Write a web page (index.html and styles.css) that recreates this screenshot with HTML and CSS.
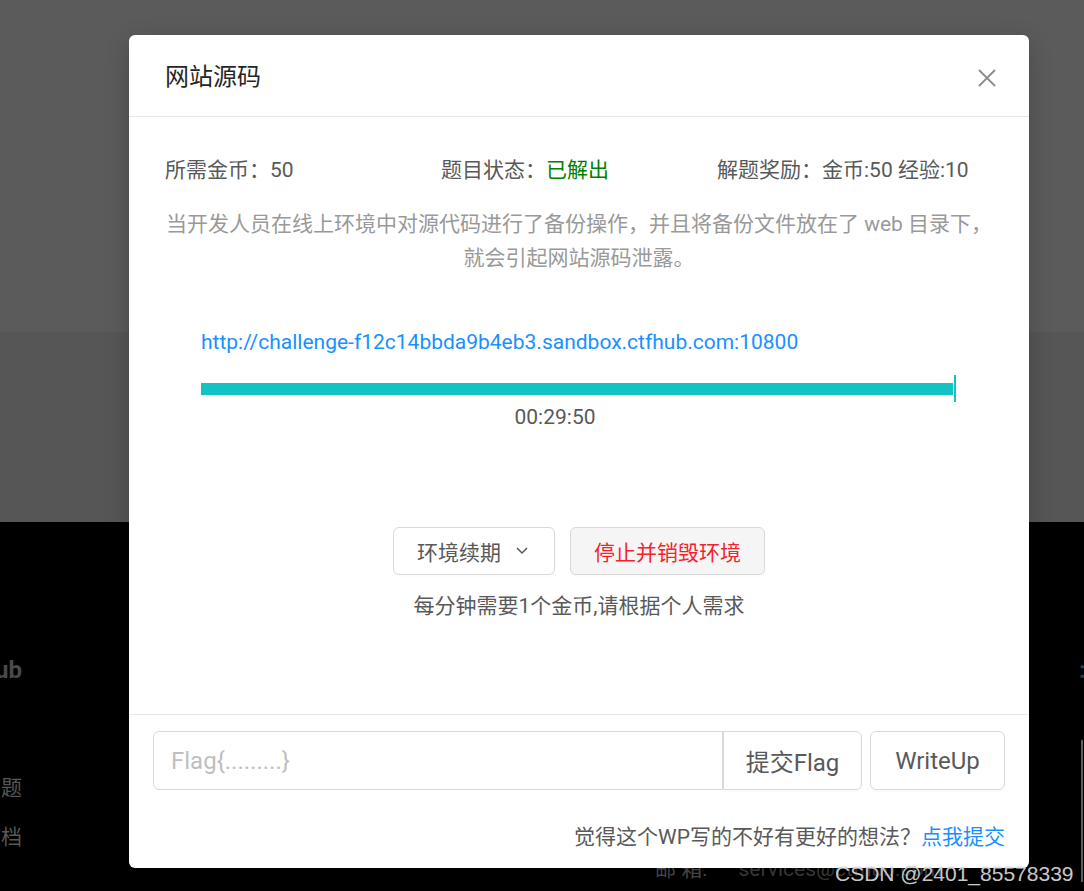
FILE: index.html
```html
<!DOCTYPE html>
<html lang="zh-CN">
<head>
    <meta charset="UTF-8">
    <meta name="viewport" content="width=device-width, initial-scale=1.0">
    <title>网站源码 - CTFHub</title>
    <link rel="stylesheet" href="styles.css">
</head>
<body>

<div class="page">
    <div class="page-top"></div>
    <div class="page-band"></div>
    <footer class="page-footer">
        <div class="footer-brand">
            <div class="footer-title">CTFHub</div>
            <div class="footer-link first-link">技能树练习题</div>
            <div class="footer-link">平台使用文档</div>
        </div>
        <div class="footer-contact">
            <span class="contact-label">邮 箱:</span>
            <span class="contact-value">services@ctfhub.com</span>
        </div>
        <div class="footer-follow">
            <div class="footer-title follow-title">:</div>
            <div class="follow-qr"></div>
        </div>
    </footer>
</div>

<div class="modal-wrap">
    <div class="modal">
        <div class="modal-header">
            <div class="modal-title">网站源码</div>
            <span class="modal-close">
                <svg width="18" height="18" viewBox="0 0 18 18">
                    <path d="M1 1 L17 17 M17 1 L1 17" stroke="#8c8c8c" stroke-width="1.8" fill="none"/>
                </svg>
            </span>
        </div>

        <div class="modal-body">
            <div class="info-row">
                <div>所需金币：50</div>
                <div>题目状态：<span class="solved">已解出</span></div>
                <div>解题奖励：金币:50 经验:10</div>
            </div>

            <p class="desc">当开发人员在线上环境中对源代码进行了备份操作，并且将备份文件放在了 web 目录下，<br>就会引起网站源码泄露。</p>

            <div class="env">
                <a class="env-url" href="#">http://challenge-f12c14bbda9b4eb3.sandbox.ctfhub.com:10800</a>
                <div class="progress">
                    <div class="progress-bar" style="width: 99.5%"></div>
                </div>
                <div class="env-time">00:29:50</div>
            </div>

            <div class="actions">
                <button class="btn">环境续期
                    <svg class="btn-arrow" width="18" height="18" viewBox="0 0 18 18">
                        <path d="M4 6 L9 11 L14 6" stroke="#595959" stroke-width="1.5" fill="none"/>
                    </svg>
                </button>
                <button class="btn btn-danger">停止并销毁环境</button>
            </div>
            <div class="actions-tip">每分钟需要1个金币,请根据个人需求</div>
        </div>

        <div class="modal-footer">
            <div class="flag-row">
                <div class="flag-group">
                    <input class="flag-input" type="text" placeholder="Flag{.........}">
                    <button class="btn btn-lg flag-submit">提交Flag</button>
                </div>
                <button class="btn btn-lg writeup">WriteUp</button>
            </div>
            <div class="wp-tip">觉得这个WP写的不好有更好的想法？<a href="#">点我提交</a></div>
        </div>
    </div>
</div>

<div class="watermark">CSDN @2401_85578339</div>

</body>
</html>
```

FILE: styles.css
```css
* {
    box-sizing: border-box;
}
html, body {
    margin: 0;
    height: 100%;
}
body {
    position: relative;
    overflow: hidden;
    background: #000;
    font-family: Roboto, "Noto Sans CJK SC", sans-serif;
    font-size: 21px;
    color: #595959;
}

/* page behind the mask */
.page-top {
    height: 332px;
    background: #5b5b5b;
}
.page-band {
    height: 190px;
    background: #565656;
}
.page-footer {
    height: 369px;
    background: #000;
    display: flex;
    overflow: hidden;
}
.page-footer > div {
    flex-shrink: 0;
}
.footer-brand {
    width: 200px;
    margin-left: -178px;
    padding-top: 130px;
    text-align: right;
    white-space: nowrap;
}
.footer-title {
    font-size: 24px;
    line-height: 36px;
    font-weight: bold;
    color: #4a4a4a;
}
.footer-link {
    line-height: 49px;
    color: #575757;
}
.first-link {
    margin-top: 76px;
}
.footer-contact {
    width: 424px;
    margin-left: 633px;
    padding-top: 331px;
    line-height: 32px;
    white-space: nowrap;
}
.contact-label {
    color: #4d4d4d;
    margin-right: 26px;
}
.contact-value {
    color: #3d3d3d;
}
.footer-follow {
    width: 40px;
    padding-top: 130px;
    white-space: nowrap;
}
.follow-title {
    color: #1f3a5a;
}
.follow-qr {
    margin-top: 52px;
    width: 20px;
    height: 142px;
    margin-left: 2px;
    border-left: 2px solid #5e5e5e;
}

/* modal */
.modal-wrap {
    position: absolute;
    top: 0;
    left: 0;
    right: 0;
    bottom: 0;
    padding: 35px 0 0 129px;
}
.modal {
    width: 900px;
    background: #fff;
    border-radius: 6px;
    box-shadow: 0 6px 24px rgba(0, 0, 0, 0.2);
}
.modal-header {
    position: relative;
    padding: 26px 36px 22px;
    border-bottom: 1px solid #e8e8e8;
}
.modal-title {
    font-size: 24px;
    line-height: 33px;
    color: #262626;
}
.modal-close {
    position: absolute;
    top: 0;
    right: 0;
    width: 84px;
    height: 86px;
    display: flex;
    align-items: center;
    justify-content: center;
}
.modal-body {
    padding: 38px 36px 92px;
}
.info-row {
    display: grid;
    grid-template-columns: repeat(3, 1fr);
    line-height: 31.5px;
}
.solved {
    color: #008000;
}
.desc {
    margin: 20.7px -24px 0;
    line-height: 34px;
    text-align: center;
    color: #999;
    white-space: nowrap;
}
.env {
    margin-top: 52px;
    padding: 0 36px;
}
.env-url {
    display: block;
    line-height: 31.5px;
    color: #1890ff;
    text-decoration: none;
}
.progress {
    margin-top: 24px;
    height: 12px;
    background: #f5f5f5;
}
.progress-bar {
    position: relative;
    height: 12px;
    background: #13c2c2;
}
.progress-bar::after {
    content: "";
    position: absolute;
    right: -3px;
    top: -8px;
    width: 2px;
    height: 27px;
    background: #13c2c2;
}
.env-time {
    margin-top: 7.5px;
    padding-right: 48px;
    line-height: 31.5px;
    text-align: center;
}
.actions {
    margin-top: 93px;
    display: flex;
    justify-content: center;
    gap: 15px;
}
.btn {
    height: 48px;
    padding: 0 23px;
    display: inline-flex;
    align-items: center;
    justify-content: center;
    border: 1px solid #d9d9d9;
    border-radius: 6px;
    background: #fff;
    font-family: inherit;
    font-size: 21px;
    color: #595959;
    box-shadow: 0 2px 0 rgba(0, 0, 0, 0.015);
    cursor: pointer;
}
.btn-arrow {
    margin-left: 12px;
}
.btn-danger {
    background: #f5f5f5;
    color: #f5222d;
}
.actions-tip {
    margin-top: 16px;
    line-height: 31.5px;
    text-align: center;
}

/* footer with flag input */
.modal-footer {
    border-top: 1px solid #e8e8e8;
    padding: 16px 24px 14px;
}
.flag-row {
    display: flex;
    gap: 8px;
}
.flag-group {
    flex: 1;
    display: flex;
}
.flag-input {
    flex: 1;
    height: 59px;
    padding: 0 17px;
    border: 1px solid #d9d9d9;
    border-radius: 6px 0 0 6px;
    font-family: inherit;
    font-size: 24px;
    color: #595959;
    outline: none;
}
.flag-input::placeholder {
    color: #bfbfbf;
}
.btn-lg {
    height: 59px;
    font-size: 24px;
    padding: 0;
}
.flag-submit {
    width: 139px;
    border-radius: 0 6px 6px 0;
}
.writeup {
    width: 135px;
}
.wp-tip {
    margin-top: 32px;
    line-height: 31.5px;
    text-align: right;
}
.wp-tip a {
    color: #1890ff;
    text-decoration: none;
}

.watermark {
    position: absolute;
    top: 863px;
    left: 835px;
    font-family: "Liberation Sans", Arial, sans-serif;
    font-size: 21px;
    line-height: 21px;
    color: rgba(255, 255, 255, 0.8);
    text-shadow: 0 0 1px rgba(0, 0, 0, 0.6);
    white-space: nowrap;
}
```
